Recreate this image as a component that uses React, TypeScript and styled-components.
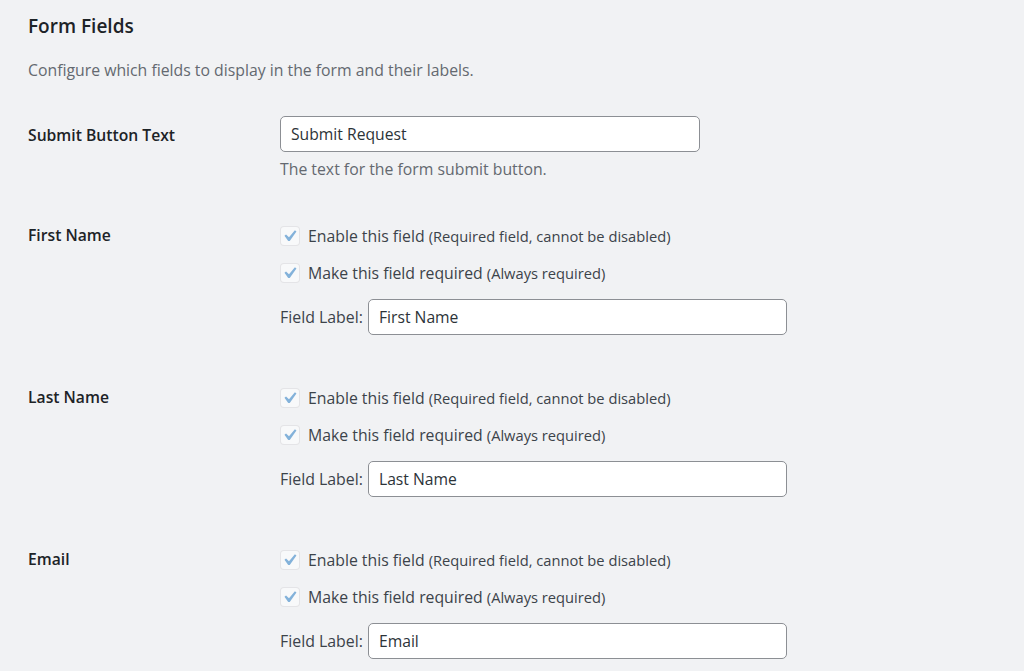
import React from 'react';
import styled, { createGlobalStyle } from 'styled-components';

const GlobalStyle = createGlobalStyle`
  html, body {
    margin: 0;
    padding: 0;
    background: #f1f2f4;
  }
  body {
    font-family: "Open Sans", "Noto Sans", "Liberation Sans", sans-serif;
    color: #3c434a;
  }
`;

const Wrap = styled.div`
  padding: 0 28px;
  min-height: 671px;
`;

const Title = styled.h2`
  margin: 0;
  padding-top: 14px;
  font-size: 19px;
  line-height: 24px;
  font-weight: 600;
  color: #1d2327;
`;

const Intro = styled.p`
  margin: 21px 0 0;
  font-size: 15.8px;
  line-height: 22px;
  color: #646970;
`;

const FormTable = styled.div`
  margin-top: 17px;
`;

const Row = styled.div<{ $padBottom: number }>`
  display: grid;
  grid-template-columns: 252px 1fr;
  padding: 18px 0 ${(p) => p.$padBottom}px;
`;

const Heading = styled.div`
  padding-top: 6px;
  font-size: 15.7px;
  line-height: 27px;
  font-weight: 600;
  color: #1d2327;
`;

const Cell = styled.div`
  display: flex;
  flex-direction: column;
  align-items: flex-start;
`;

const TextInput = styled.input<{ $width: number }>`
  box-sizing: border-box;
  width: ${(p) => p.$width}px;
  height: 36px;
  padding: 0 10px;
  border: 1px solid #8c8f94;
  border-radius: 5px;
  background: #fff;
  font-family: inherit;
  font-size: 15.7px;
  color: #2c3338;
  outline: none;
`;

const Help = styled.p`
  margin: 6px 0 0;
  font-size: 15.8px;
  line-height: 22px;
  color: #646970;
`;

const CheckRow = styled.label<{ $height: number }>`
  display: flex;
  align-items: center;
  gap: 8px;
  height: ${(p) => p.$height}px;
  font-size: 15.8px;
  color: #3c434a;
`;

const Box = styled.span`
  box-sizing: border-box;
  width: 20px;
  height: 20px;
  border: 1px solid rgba(220, 220, 222, 0.7);
  border-radius: 4px;
  background: rgba(255, 255, 255, 0.5);
  display: flex;
  align-items: center;
  justify-content: center;
`;

const Note = styled.span`
  font-size: 14.7px;
  margin-left: 4px;
`;

const LabelRow = styled.div`
  display: flex;
  align-items: center;
  gap: 5px;
  margin-top: 9px;
  font-size: 15.9px;
  color: #3c434a;
`;

const Check = () => (
  <Box>
    <svg width="15" height="14" viewBox="4.5 3.8 13 12">
      <path
        d="M14.83 4.89l1.34.94-5.81 8.38H9.02L5.78 9.67l1.34-1.25 2.57 2.4z"
        fill="#3582c4"
        opacity="0.6"
      />
    </svg>
  </Box>
);

const fields = ['First Name', 'Last Name', 'Email'];

const App: React.FC = () => (
  <>
    <GlobalStyle />
    <Wrap>
      <Title>Form Fields</Title>
      <Intro>Configure which fields to display in the form and their labels.</Intro>
      <FormTable>
        <Row $padBottom={18}>
          <Heading>Submit Button Text</Heading>
          <Cell>
            <TextInput $width={420} defaultValue="Submit Request" />
            <Help>The text for the form submit button.</Help>
          </Cell>
        </Row>
        {fields.map((name) => (
          <Row key={name} $padBottom={25}>
            <Heading>{name}</Heading>
            <Cell>
              <CheckRow $height={40}>
                <Check />
                <span>
                  Enable this field<Note>(Required field, cannot be disabled)</Note>
                </span>
              </CheckRow>
              <CheckRow $height={34}>
                <Check />
                <span>
                  Make this field required<Note>(Always required)</Note>
                </span>
              </CheckRow>
              <LabelRow>
                Field Label:
                <TextInput $width={419} defaultValue={name} />
              </LabelRow>
            </Cell>
          </Row>
        ))}
      </FormTable>
    </Wrap>
  </>
);

export default App;
